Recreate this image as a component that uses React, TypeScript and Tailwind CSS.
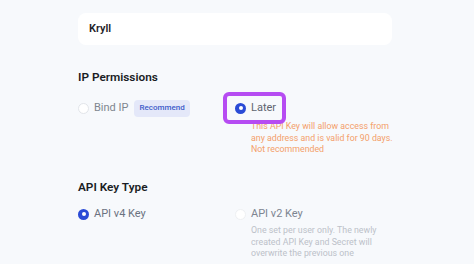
import type { ReactNode } from 'react';

function Radio({ checked, faint }: { checked?: boolean; faint?: boolean }) {
  if (checked) {
    return (
      <span className="w-[11px] h-[11px] rounded-full bg-[#2a4bd6] flex items-center justify-center flex-shrink-0">
        <span className="w-[4px] h-[4px] rounded-full bg-white"></span>
      </span>
    );
  }
  return (
    <span
      className={`w-[11px] h-[11px] rounded-full bg-white border flex-shrink-0 ${
        faint ? 'border-[#eef0f3]' : 'border-[#e2e5ea]'
      }`}
    ></span>
  );
}

interface OptionProps {
  checked?: boolean;
  faint?: boolean;
  label: string;
  labelClass?: string;
  extra?: ReactNode;
  description?: ReactNode;
}

function Option({ checked, faint, label, labelClass = 'text-[#6b7280]', extra, description }: OptionProps) {
  return (
    <div className="flex items-start gap-[5px]">
      <div className="h-[18px] flex items-center">
        <Radio checked={checked} faint={faint} />
      </div>
      <div>
        <div className="flex items-center gap-[6px] h-[18px]">
          <span className={`text-[11px] ${labelClass}`}>{label}</span>
          {extra}
        </div>
        {description}
      </div>
    </div>
  );
}

export default function App() {
  return (
    <div
      className="w-[474px] h-[264px] overflow-hidden bg-[#f7f9fc]"
      style={{ fontFamily: 'Roboto, "Noto Sans", sans-serif' }}
    >
      <div className="pl-[78px] pt-[13px]">
        <div className="w-[314px] h-[32px] bg-white rounded-lg flex items-center px-[11px]">
          <span className="text-[11px] font-semibold text-[#1f2329]">Kryll</span>
        </div>

        <h2 className="mt-[22px] text-[11.8px] leading-[20px] font-semibold text-[#1a1d24]">IP Permissions</h2>
        <div className="mt-[12px] grid grid-cols-[157px_1fr]">
          <Option
            label="Bind IP"
            labelClass="text-[#80868f]"
            extra={
              <span className="h-[17px] px-[5px] rounded bg-[#e4e8f9] text-[8px] font-medium text-[#3d5bc9] flex items-center">
                Recommend
              </span>
            }
          />
          <div className="relative">
            <Option
              checked
              label="Later"
              labelClass="text-[#5f6570]"
              description={
                <p className="mt-[4px] w-[150px] text-[8.8px] leading-[11.7px] text-[#f4a06a]">
                  This API Key will allow access from any address and is valid for 90 days. Not recommended
                </p>
              }
            />
            <div className="absolute left-[-12px] top-[-7px] w-[63px] h-[32px] rounded-md border-4 border-[#b64cf2]"></div>
          </div>
        </div>

        <h2 className="mt-[21px] text-[11.8px] leading-[20px] font-semibold text-[#1a1d24]">API Key Type</h2>
        <div className="mt-[8px] grid grid-cols-[157px_1fr]">
          <Option checked label="API v4 Key" />
          <Option
            faint
            label="API v2 Key"
            labelClass="text-[#7d8591]"
            description={
              <p className="mt-[2px] w-[130px] text-[8.8px] leading-[11.5px] text-[#bcc1c9]">
                One set per user only. The newly created API Key and Secret will overwrite the previous one
              </p>
            }
          />
        </div>
      </div>
    </div>
  );
}
